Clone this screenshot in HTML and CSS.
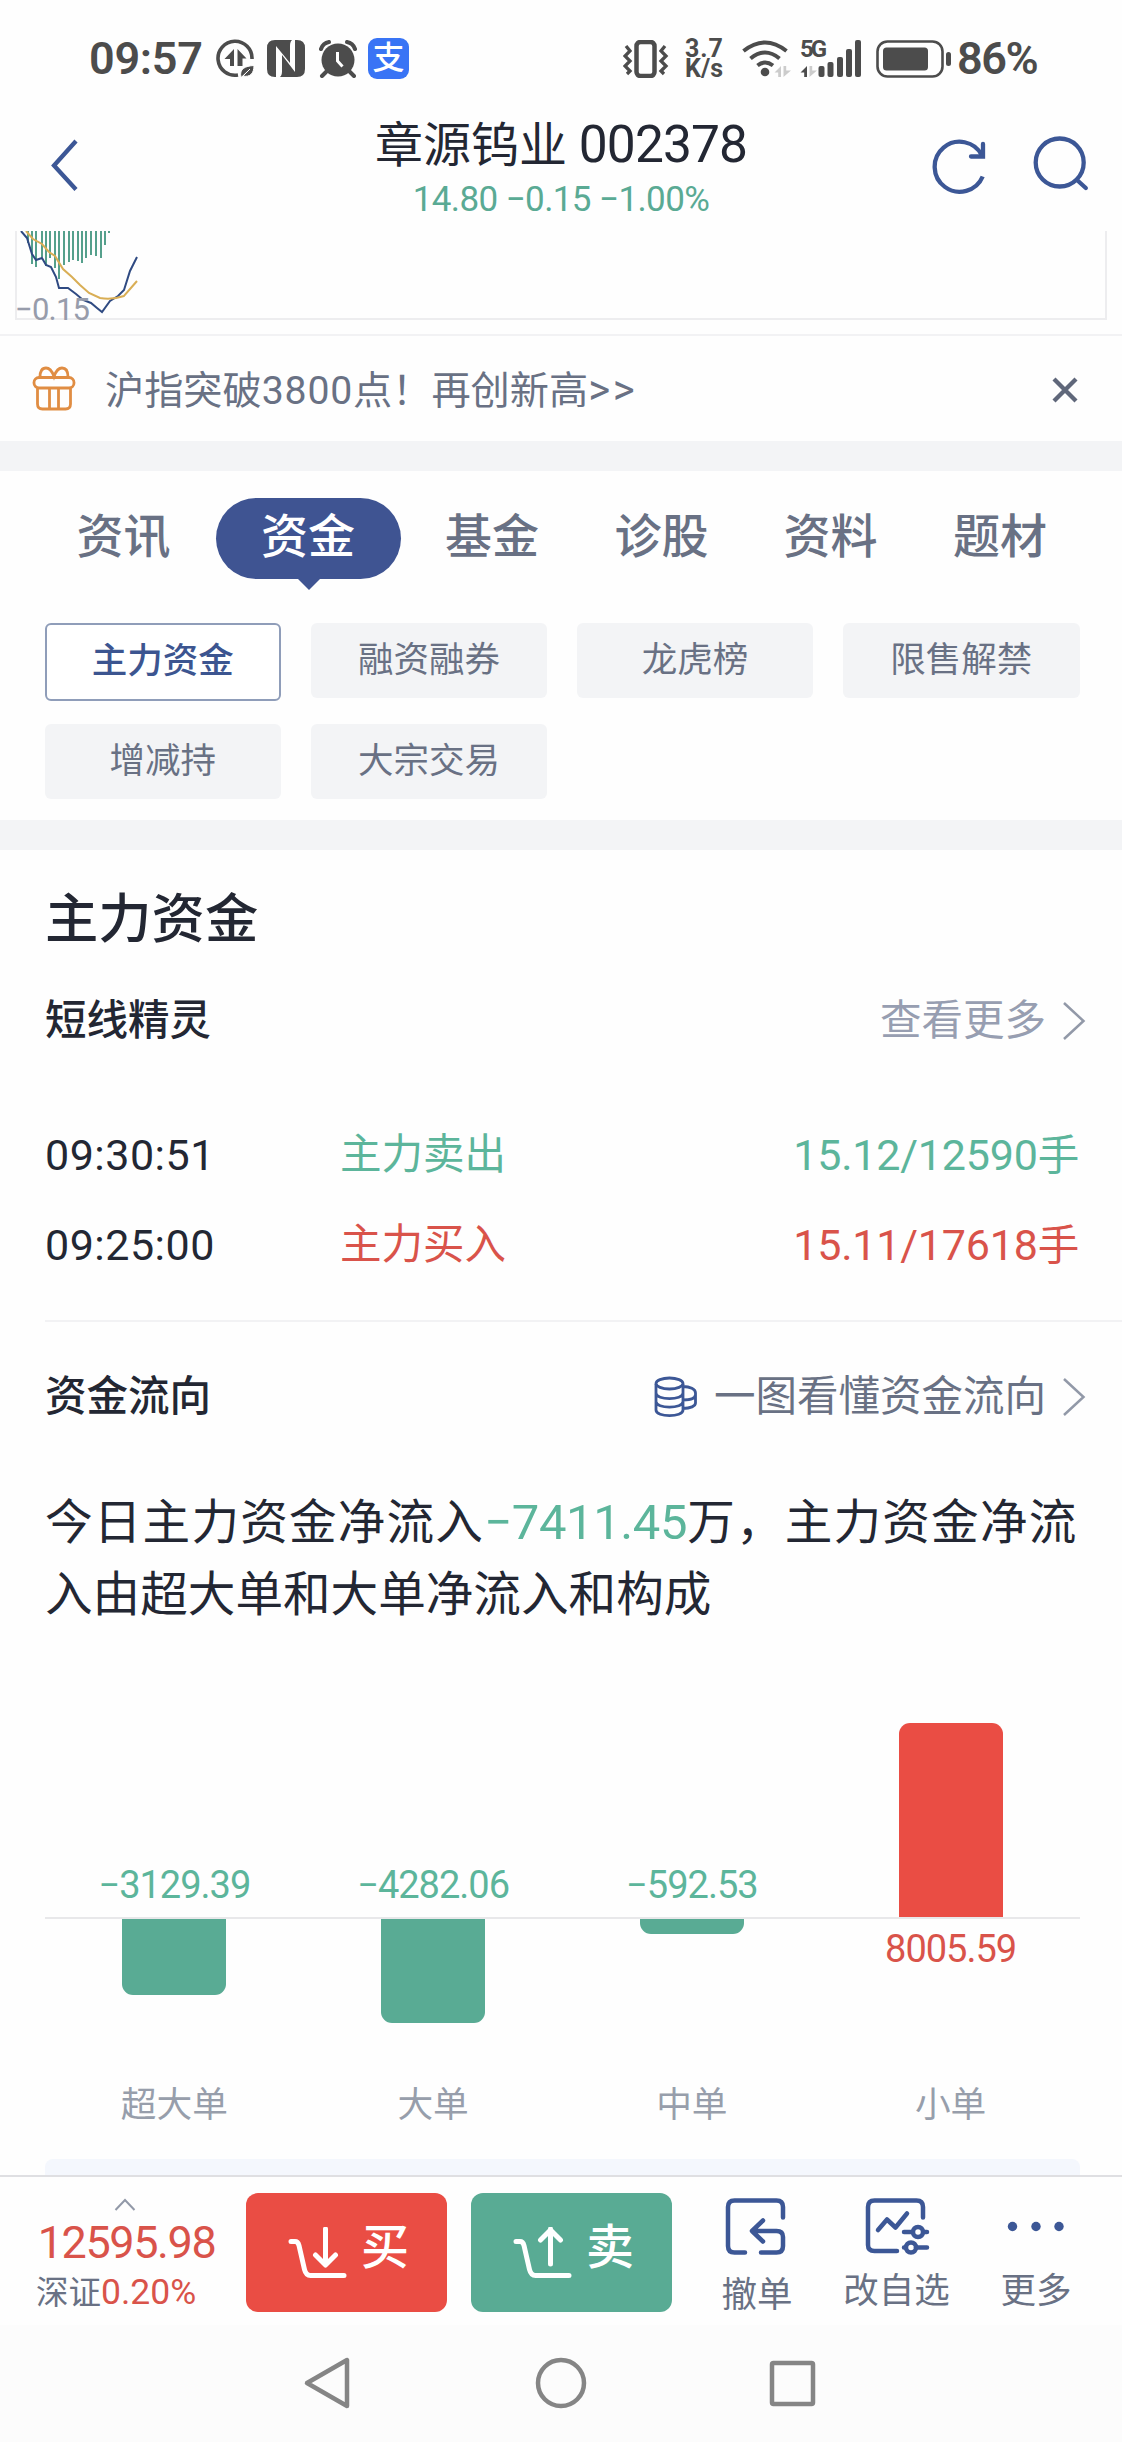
FILE: index.html
```html
<!DOCTYPE html>
<html lang="zh-CN">
<head>
<meta charset="utf-8">
<title>章源钨业 002378</title>
<link rel="stylesheet" href="styles.css">
</head>
<body>
<div class="status">
  <span class="status-time">09:57</span>
  <svg class="st-data" width="40" height="40" viewBox="0 0 40 40"><path d="M36 20A17 17 0 1 0 22 36" fill="none" stroke="#4c4c4c" stroke-width="3.600"/><path d="M18 10v17h-4v-7H8.500zM21.500 10l9 9.500h-4v7.500h-5z" fill="#4c4c4c"/><path d="M25 38c-2-8 4-11 13-11.500 0 8-4 12-11 10.500l7-7" fill="#4c4c4c" stroke="#fff" stroke-width="1"/></svg>
  <svg class="st-nfc" width="38" height="38" viewBox="0 0 38 38"><path d="M8 0h17c-2 2-2 4-2 7v16L9 6v31H8q-8 0-8-8V8Q0 0 8 0zM28 0h2q8 0 8 8v21q0 8-8 8H13c2-2 2-4 2-7V15l13 17z" fill="#4c4c4c"/></svg>
  <svg class="st-alarm" width="38" height="38" viewBox="0 0 38 38"><circle cx="19" cy="20" r="16.500" fill="#4c4c4c"/><path d="M2 9Q4 3 10 2M36 9Q34 3 28 2M8 31l-5 5M30 31l5 5" stroke="#4c4c4c" stroke-width="4" stroke-linecap="round" fill="none"/><path d="M18.500 12v9l5 5.500" stroke="#fff" stroke-width="3" fill="none"/></svg>
  <span class="alipay">支</span>
  <svg class="st-vib" width="46" height="38" viewBox="0 0 46 38"><rect x="13.500" y="2" width="18" height="34" rx="4" fill="none" stroke="#4c4c4c" stroke-width="4.500"/><path d="M3 6l4 5-5 5 5 5-5 5 5 5-3 3M42 6l-4 5 5 5-5 5 5 5-5 5 3 3" fill="none" stroke="#4c4c4c" stroke-width="3.300"/></svg>
  <span class="speed"><span>3.7</span><span>K/s</span></span>
  <svg class="st-wifi" width="50" height="38" viewBox="0 0 50 38"><g fill="none" stroke="#4c4c4c" stroke-width="4"><path d="M1.500 11Q23 -6 44.500 11"/><path d="M8.500 18.500Q23 6.500 37.500 18.500"/><path d="M15.500 25.500Q23 19.500 31 25.500"/></g><circle cx="23" cy="32" r="4.300" fill="#4c4c4c"/><path d="M39 26v11h-2.800v-4.500H32.500zM41.500 26h2.700v4.500H49L41.500 37z" fill="#ccc"/></svg>
  <span class="signal"><b>5G</b>
  <svg width="62" height="38" viewBox="0 0 62 38"><path d="M7 26v11H4.200v-4.500H0.500z" fill="#4c4c4c"/><path d="M9.500 26h2.700v4.500H17L9.500 37z" fill="#ccc"/><g fill="#4c4c4c"><rect x="18.500" y="26" width="6" height="11" rx="2"/><rect x="27.500" y="22" width="6" height="15" rx="2"/><rect x="37" y="17" width="6" height="20" rx="2"/><rect x="46" y="9" width="6" height="28" rx="2"/><rect x="55" y="0" width="6" height="37" rx="2"/></g></svg></span>
  <svg class="st-bat" width="76" height="38" viewBox="0 0 76 38"><rect x="1.500" y="1.500" width="65" height="35" rx="10" fill="none" stroke="#4c4c4c" stroke-width="2.600"/><rect x="7" y="7.500" width="45" height="23" rx="3.500" fill="#4c4c4c"/><rect x="70" y="12" width="5" height="14" rx="2.500" fill="#4c4c4c"/></svg>
  <span class="status-pct">86%</span>
</div>

<header class="header">
  <svg class="back" width="30" height="54" viewBox="0 0 30 54"><path d="M26 3L4 27.500l22 24" fill="none" stroke="#3c5796" stroke-width="4.300"/></svg>
  <div class="title"><h1>章源钨业 <span>002378</span></h1><p>14.80 −0.15 −1.00%</p></div>
  <div class="tools">
    <svg width="60" height="60" viewBox="0 0 60 60"><path d="M53.700 41.500A25 25 0 1 1 53 20.500" fill="none" stroke="#3c5796" stroke-width="4.300"/><path d="M54 9v12.500H42" fill="none" stroke="#3c5796" stroke-width="4.300" stroke-linecap="round"/></svg>
    <svg width="60" height="60" viewBox="0 0 60 60"><circle cx="28.700" cy="27.500" r="24" fill="none" stroke="#3c5796" stroke-width="4.300"/><path d="M46 45l8.800 8" stroke="#3c5796" stroke-width="4.300" stroke-linecap="round"/></svg>
  </div>
</header>

<section class="mini">
  <div class="mini-chart">
    <svg width="180" height="89" viewBox="1 0 180 89">
      <path d="M12 0v12M16 0v33M20 0v36M26 0v26M30 0v35M34 0v27M39 0v37M43 0v48M48 0v34M53 0v31M57 0v29M62 0v30M66 0v32M70 0v27M75 0v24M80 0v25M85 0v27M89 0v14M93 0v2" stroke="#55a08c" stroke-width="2"/>
      <path d="M5 0l6 7 5 16 4 6 6-2 4 7 5 2 5 10 3 11 9 0 8 6 7 6 8 3 6 5 5 4 8-11 8-5 6-6 6-19 7-14" fill="none" stroke="#2f4a82" stroke-width="2"/>
      <path d="M10 0l7 8 9 5 7 8 6 4 8 13 9 8 8 8 9 8 11 5q12 2 24-2l13-15" fill="none" stroke="#d9ae55" stroke-width="2"/>
    </svg>
    <span class="mini-label">−0.15</span>
  </div>
</section>

<div class="notice">
  <svg width="44" height="46" viewBox="0 0 44 46"><g fill="none" stroke="#e08d43" stroke-width="2.800"><rect x="2" y="11.500" width="40" height="10.500" rx="5"/><path d="M5.500 22.500V38q0 5 5 5h23q5 0 5-5V22.500M17.500 22.500V43M26.500 22.500V43M8 11Q8 2 14 2q5 0 8 8.500Q25 2 30 2q6 0 6 9"/></g></svg>
  <p>沪指突破<span>3800</span>点！再创新高<span class="arrows">&gt;&gt;</span></p>
  <svg class="close" width="28" height="28" viewBox="0 0 28 28"><path d="M3 3l22 22M25 3L3 25" stroke="#5f677a" stroke-width="4.300"/></svg>
</div>

<nav class="tabs">
  <a>资讯</a><a class="active">资金</a><a>基金</a><a>诊股</a><a>资料</a><a>题材</a>
</nav>
<div class="chips">
  <a class="on">主力资金</a><a>融资融券</a><a>龙虎榜</a><a>限售解禁</a><a>增减持</a><a>大宗交易</a>
</div>

<main class="main">
  <h2>主力资金</h2>
  <div class="row-head"><h3>短线精灵</h3><a class="muted">查看更多<svg width="24" height="40" viewBox="0 0 24 40"><path d="M2 2l19.500 18L2 38" fill="none" stroke="#9299a8" stroke-width="2.500"/></svg></a></div>
  <ul class="trades">
    <li><time>09:30:51</time><span class="act green">主力卖出</span><span class="amt green">15.12/12590<i>手</i></span></li>
    <li><time>09:25:00</time><span class="act red">主力买入</span><span class="amt red">15.11/17618<i>手</i></span></li>
  </ul>
  <div class="row-head flow"><h3>资金流向</h3><a><svg class="coins" width="44" height="42" viewBox="0 0 44 42"><g fill="none" stroke="#3c5796" stroke-width="2.800"><ellipse cx="15.500" cy="7.500" rx="13.500" ry="5.500"/><path d="M2 8v26c0 7.500 27 7.500 27 0V8M2 17c0 7.500 27 7.500 27 0M2 25.500c0 7.500 27 7.500 27 0M29 10.500c7 0 12.500 2.500 12.500 6.500v10c0 3-5 5.500-12.500 5.500M41.500 18.500c0 4-5 5.500-12.500 5.500"/></g></svg>一图看懂资金流向<svg width="24" height="40" viewBox="0 0 24 40"><path d="M2 2l19.500 18L2 38" fill="none" stroke="#9299a8" stroke-width="2.500"/></svg></a></div>
  <p class="summary"><span class="line first">今日主力资金净流入<em>−7411.45</em>万，主力资金净流</span><span class="line">入由超大单和大单净流入和构成</span></p>

  <div class="bars">
    <div class="col"><div class="up"><span class="green">−3129.39</span></div><div class="down"><div class="bar neg" style="height:76px"></div></div><label>超大单</label></div>
    <div class="col"><div class="up"><span class="green">−4282.06</span></div><div class="down"><div class="bar neg" style="height:104px"></div></div><label>大单</label></div>
    <div class="col"><div class="up"><span class="green">−592.53</span></div><div class="down"><div class="bar neg" style="height:15px"></div></div><label>中单</label></div>
    <div class="col"><div class="up"><div class="bar pos" style="height:194px"></div></div><div class="down"><span class="red">8005.59</span></div><label>小单</label></div>
  </div>
  <div class="tip-box"></div>
</main>

<footer class="trade-bar">
  <div class="index"><svg width="22" height="13" viewBox="0 0 22 13"><path d="M1.500 12L11 2l9.500 10" fill="none" stroke="#9299a8" stroke-width="2"/></svg><strong>12595.98</strong><p>深证<span>0.20%</span></p></div>
  <a class="btn buy"><svg width="60" height="52" viewBox="0 0 60 52"><path d="M3 14.500h4q3 0 4 4l5.500 24q1.500 6 6 6H56M37.500 2v34M27.500 28l10 10 10-10" /></svg><span>买</span></a>
  <a class="btn sell"><svg width="60" height="52" viewBox="0 0 60 52"><path d="M3 14.500h4q3 0 4 4l5.500 24q1.500 6 6 6H56M37.500 37V2M27.500 13l10-10 10 10" /></svg><span>卖</span></a>
  <a class="tool t1"><svg width="68" height="60" viewBox="0 0 68 60"><path d="M60 20.500V10q0-6.500-6.500-6.500h-42Q5 3.500 5 10v39q0 6.500 6.500 6.500H22M38 55.500h15.500q6.500 0 6.500-6.500V40q0-6-6.500-6H30M40 23.500L29 34l11 10.500"/></svg>撤单</a>
  <a class="tool t2"><svg width="68" height="60" viewBox="0 0 68 60"><path d="M60 20.500V10q0-6.500-6.500-6.500h-42Q5 3.500 5 10v38q0 6 6.500 6H34M15 33l9-10.500 8.500 8L44 16.500M41 35h8M61 35h3M41 50.500h1M53 50.500h11"/><circle cx="55" cy="35" r="5"/><circle cx="48" cy="50.500" r="5"/></svg>改自选</a>
  <a class="tool t3"><svg width="68" height="60" viewBox="0 0 68 60"><g class="dots"><circle cx="10.500" cy="29.500" r="4.700"/><circle cx="34" cy="29.500" r="4.700"/><circle cx="57" cy="29.500" r="4.700"/></g></svg>更多</a>
</footer>
<div class="sysnav">
  <svg width="54" height="54" viewBox="0 0 54 54"><path d="M46 4v46L6 27z"/></svg>
  <svg width="54" height="54" viewBox="0 0 54 54"><circle cx="27" cy="27" r="23"/></svg>
  <svg width="54" height="54" viewBox="0 0 54 54"><rect x="5" y="7" width="41" height="41" rx="1.500"/></svg>
</div>
</body>
</html>
```

FILE: styles.css
```css
* { box-sizing: border-box; margin: 0; padding: 0; }
body { width: 1122px; height: 2442px; overflow: hidden; background: #fefefe; color: #232733; font-family: Roboto, "Noto Sans CJK SC", sans-serif; display: flex; flex-direction: column; }
body > * { flex: none; }
svg { display: block; flex: none; }
i, em { font-style: normal; }
.green { color: #5cb59b; }
.red { color: #d9534a; }

.status { height: 117px; padding: 0 0 0 89px; display: flex; align-items: center; color: #4c4c4c; }
.status-time { width: 127px; font-size: 45px; font-weight: 600; line-height: 60px; letter-spacing: -.3px; }
.st-nfc { margin-left: 11px; }
.st-alarm { margin-left: 14px; }
.alipay { width: 41px; height: 41px; margin-left: 11px; border-radius: 9px; background: #3974f5; color: #fff; font-size: 32px; line-height: 41px; text-align: center; font-weight: 500; }
.st-vib { margin-left: 214px; }
.speed { width: 57px; margin-left: 16px; display: flex; flex-direction: column; font-size: 25px; font-weight: 700; line-height: 20px; }
.speed span:first-child { letter-spacing: 1px; }
.signal { width: 62px; height: 38px; margin-left: 8px; position: relative; }
.signal b { position: absolute; left: 0; top: 0; font-size: 24px; line-height: 19px; letter-spacing: -3px; }
.st-bat { margin-left: 14px; }
.status-pct { margin-left: 5px; font-size: 45px; font-weight: 600; line-height: 60px; letter-spacing: -1.500px; }

.header { height: 114px; padding: 0 31px; display: grid; grid-template-columns: 1fr 400px 1fr; }
.back { margin: 21px 0 0 18.500px; }
.title { text-align: center; }
.title h1 { font-size: 48px; font-weight: 400; line-height: 56px; white-space: nowrap; }
.title h1 span { font-size: 51.500px; letter-spacing: -.9px; }
.title p { margin-top: 5px; font-size: 35px; line-height: 42px; letter-spacing: -.6px; color: #5aaa94; white-space: nowrap; }
.tools { display: flex; justify-content: flex-end; gap: 42px; padding-top: 18px; }

.mini { height: 105px; padding: 0 15px; border-bottom: 2px solid #f2f2f4; }
.mini-chart { position: relative; height: 89px; border: 2px solid #ededef; border-top: 0; }
.mini-label { position: absolute; left: -2px; bottom: -10px; font-size: 31px; line-height: 36px; letter-spacing: -.8px; color: #979cab; }

.notice { height: 105px; padding: 3px 43px 0 32px; display: flex; align-items: center; }
.notice svg:first-child { margin-top: -3px; }
.notice p { margin-left: 29px; flex: 1; color: #697184; font-size: 39.200px; line-height: 60px; }
.notice span { letter-spacing: .8px; }
.notice .arrows { font-size: 42px; letter-spacing: 2.500px; }

.tabs { height: 152px; padding: 27px 36px 0 38px; border-top: 30px solid #f3f4f6; display: grid; grid-template-columns: 171px 198px 170px 169px 169px 170px; }
.tabs a { height: 81px; line-height: 77px; text-align: center; font-size: 47px; font-weight: 500; color: #697184; }
.tabs a.active { position: relative; width: 185px; margin-left: 6.500px; border-radius: 41px; background: #3f5492; color: #fff; }
.tabs a.active::after { content: ""; position: absolute; left: 81px; top: 80px; border: 12px solid transparent; border-top-color: #3f5492; border-bottom: 0; }

.chips { height: 227px; padding: 30px 41px 0 44.500px; display: grid; grid-template-columns: repeat(4, 236.500px); grid-auto-rows: 75px; gap: 26px 29.700px; }
.chips a { border-radius: 6px; background: #f3f4f6; color: #697184; font-size: 35.500px; line-height: 75px; text-align: center; }
.chips a.on { height: 78px; background: #fff; border: 2px solid #8f9db9; line-height: 73px; color: #3c5590; font-weight: 500; }

.main { height: 1355px; padding: 0 0 0 45px; border-top: 30px solid #f3f4f6; overflow: hidden; }
.main h2 { margin-top: 34px; font-size: 53.300px; line-height: 72px; font-weight: 500; }
.row-head { height: 60px; margin-top: 35px; padding-right: 36px; display: flex; justify-content: space-between; align-items: center; font-size: 41.500px; line-height: 60px; }
.row-head h3 { font-size: 41.500px; font-weight: 500; }
.row-head a { display: flex; align-items: center; color: #697184; gap: 16px; }
.row-head a.muted { color: #979eb1; }
.trades { list-style: none; margin-top: 59px; padding-right: 43px; height: 210px; font-size: 43px; }
.trades li { display: flex; height: 90px; line-height: 90px; }
.trades time { width: 295px; letter-spacing: .5px; }
.trades .act { font-size: 41.500px; flex: 1; }
.trades .amt { letter-spacing: -.2px; }
.trades i { font-size: 41.500px; }
.row-head.flow { height: 152px; margin: 0; border-top: 2px solid #f2f2f4; }
.summary { height: 143px; margin-top: 15px; }
.summary .line { display: block; height: 72px; line-height: 72px; font-size: 47.600px; white-space: nowrap; }
.summary .first { letter-spacing: 1.200px; }
.summary em { color: #5cb59b; font-size: 49px; letter-spacing: -.4px; }

.bars { width: 1035px; height: 515px; margin-top: 14px; display: grid; grid-template-columns: repeat(4, 1fr); }
.col { display: flex; flex-direction: column; align-items: center; font-size: 38px; letter-spacing: -1px; }
.up { width: 100%; height: 275px; border-bottom: 2px solid #e8e8ea; display: flex; align-items: flex-end; justify-content: center; }
.up span { line-height: 44px; margin-bottom: 10px; }
.down { height: 151px; }
.down span { display: block; line-height: 44px; margin-top: 8px; }
.bar { width: 104px; }
.neg { background: #59ab94; border-radius: 0 0 11px 11px; }
.pos { background: #ea4d44; border-radius: 11px 11px 0 0; }
.col label { margin-top: 10px; font-size: 35.700px; line-height: 50px; letter-spacing: 0; color: #979eab; }
.tip-box { width: 1035px; height: 40px; border-radius: 8px; background: #f4f7fd; }

.trade-bar { height: 150px; border-top: 2px solid #dfdfe2; padding-left: 29px; background: #fefefe; display: flex; align-items: flex-start; }
.index { width: 217px; text-align: center; padding-top: 21px; }
.index svg { margin-left: 85px; }
.index strong { display: block; width: 195px; margin-top: 5px; font-size: 45px; font-weight: 400; line-height: 54px; letter-spacing: -1.400px; color: #d9534a; }
.index p { margin: 0 0 0 7px; text-align: left; font-size: 32.500px; line-height: 44px; color: #697184; }
.index p span { font-size: 35.500px; color: #d9534a; }
.btn { width: 201px; height: 119px; margin: 16px 24px 0 0; padding-left: 42px; display: flex; align-items: center; gap: 13px; border-radius: 12px; color: #fff; font-size: 48px; font-weight: 500; line-height: 60px; }
.btn path { fill: none; stroke: #fff; stroke-width: 5; stroke-linecap: round; stroke-linejoin: round; }
.btn span { margin-bottom: 9px; }
.buy { background: #ea4d44; }
.sell { background: #59ab94; }
.tool { width: 122px; padding-top: 20px; display: flex; flex-direction: column; align-items: center; color: #697184; font-size: 35.500px; }
.tool svg { fill: none; stroke: #3c5796; stroke-width: 4.500; stroke-linecap: round; stroke-linejoin: round; }
.t1 { line-height: 76px; }
.t2 { width: 157px; line-height: 68px; }
.t3 { line-height: 68px; }
.dots { fill: #3c5796; stroke: none; }

.sysnav { height: 117px; background: #fcfcfc; display: flex; justify-content: center; gap: 179px; padding-top: 31px; }
.sysnav svg { fill: none; stroke: #858585; stroke-width: 4.500; stroke-linejoin: round; }
```
